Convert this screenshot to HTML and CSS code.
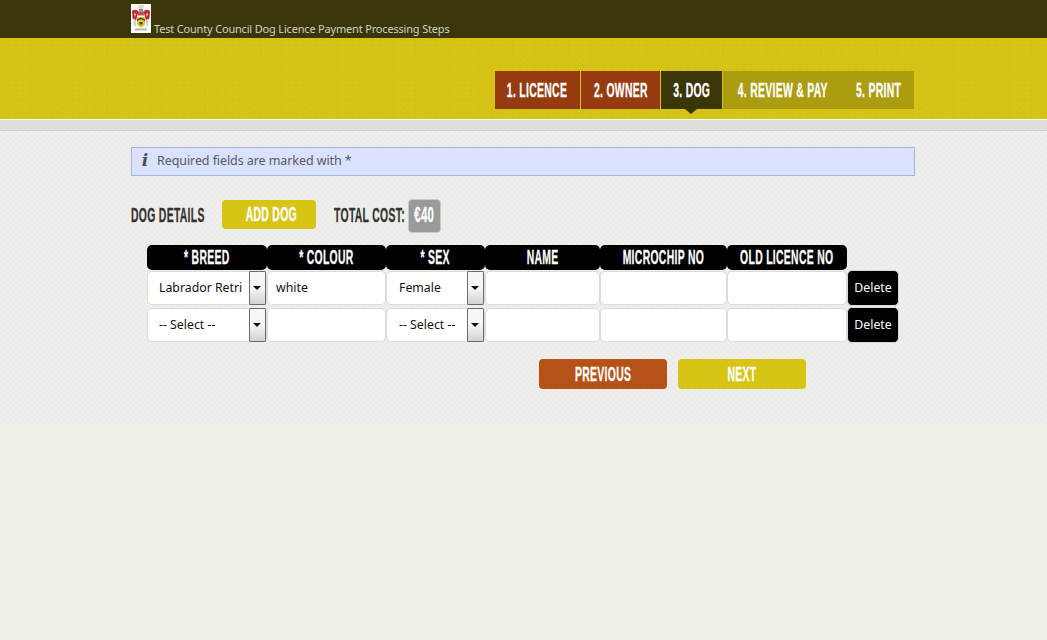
FILE: index.html
```html
<!DOCTYPE html>
<html lang="en">
<head>
<meta charset="utf-8">
<title>Dog Licence Payment Processing Steps</title>
<link rel="stylesheet" href="styles.css">
</head>
<body>
<header class="topbar">
  <div class="wrap topbar-inner">
    <svg class="crest" viewBox="0 0 20 29" aria-hidden="true">
      <rect width="20" height="29" fill="#fff"/>
      <path d="M7 1h6l-.5 4.500h-5z" fill="#dcd9d0"/>
      <path d="M8 5h4v2.500H8z" fill="#8e8a80"/>
      <path d="M1 7c2-2 5-1.500 6.500.5L6 13l-1 3.500-3.500-2zM19 7c-2-2-5-1.500-6.500.5L14 13l1 3.500 3.500-2z" fill="#c62a36"/>
      <path d="M3 9l2 1-1 3zM17 9l-2 1 1 3z" fill="#f0d9da"/>
      <path d="M7 7.500h6v4H7z" fill="#b9535a"/>
      <path d="M6 13h8v6.500c0 2-2 3-4 4-2-1-4-2-4-4z" fill="#d9c93a"/>
      <path d="M6 15.500l4-2 4 2v1.500l-4-2-4 2z" fill="#2d3a22"/>
      <path d="M8.500 18h3v2.500h-3z" fill="#46442c"/>
      <path d="M2.500 15l2.500 1v7l-2.500-2zM17.500 15l-2.500 1v7l2.500-2z" fill="#d8d4c8"/>
      <path d="M4 24.500h12v2H4z" fill="#b5b2a8"/>
    </svg>
    <span class="site-title">Test County Council Dog Licence Payment Processing Steps</span>
  </div>
</header>

<section class="banner">
  <div class="wrap banner-inner">
    <nav class="steps">
      <a class="step done s1"><span class="cond">1. Licence</span></a>
      <a class="step done s2"><span class="cond">2. Owner</span></a>
      <a class="step current s3"><span class="cond">3. Dog</span></a>
      <a class="step todo s4"><span class="cond">4. Review &amp; Pay</span></a>
      <a class="step todo s5"><span class="cond">5. Print</span></a>
    </nav>
  </div>
</section>
<div class="band"></div>

<main class="content">
  <div class="wrap">
    <p class="notice"><span class="notice-i">i</span>Required fields are marked with *</p>

    <div class="summary">
      <h2 class="display summary-title"><span class="cond cond-left">Dog Details</span></h2>
      <button class="btn btn-yellow btn-add" type="button"><span class="cond">Add Dog</span></button>
      <span class="display total-label"><span class="cond cond-left">Total Cost:</span></span>
      <span class="display total-value"><span class="cond">€40</span></span>
    </div>

    <div class="dogs">
      <div class="th"><span class="cond">* Breed</span></div>
      <div class="th"><span class="cond">* Colour</span></div>
      <div class="th"><span class="cond">* Sex</span></div>
      <div class="th"><span class="cond">Name</span></div>
      <div class="th"><span class="cond">Microchip No</span></div>
      <div class="th"><span class="cond">Old Licence No</span></div>
      <div class="th-gap"></div>

      <div class="cell"><select class="field"><option>Labrador Retriever</option></select><span class="arrow"></span></div>
      <div class="cell"><input class="field" type="text" value="white"></div>
      <div class="cell"><select class="field"><option>Female</option></select><span class="arrow"></span></div>
      <div class="cell"><input class="field" type="text"></div>
      <div class="cell"><input class="field" type="text"></div>
      <div class="cell"><input class="field" type="text"></div>
      <div class="cell-del"><button class="del" type="button">Delete</button></div>

      <div class="cell"><select class="field"><option>-- Select --</option></select><span class="arrow"></span></div>
      <div class="cell"><input class="field" type="text"></div>
      <div class="cell"><select class="field"><option>-- Select --</option></select><span class="arrow"></span></div>
      <div class="cell"><input class="field" type="text"></div>
      <div class="cell"><input class="field" type="text"></div>
      <div class="cell"><input class="field" type="text"></div>
      <div class="cell-del"><button class="del" type="button">Delete</button></div>
    </div>

    <div class="actions">
      <button class="btn btn-rust btn-nav" type="button"><span class="cond">Previous</span></button>
      <button class="btn btn-yellow btn-nav" type="button"><span class="cond">Next</span></button>
    </div>
  </div>
</main>
</body>
</html>
```
FILE: styles.css
```css
* { box-sizing: border-box; }
html, body { margin: 0; padding: 0; }
body {
  background: #efefe8;
  font-family: "Noto Sans", "Open Sans", sans-serif;
  font-size: 12px;
  color: #111;
  min-height: 640px;
}
.wrap { width: 784px; margin-left: 131px; }

.topbar { height: 38px; background: #3b3608; }
.topbar-inner { display: flex; align-items: flex-end; height: 38px; padding-bottom: 5px; }
.crest { width: 20px; height: 29px; display: block; flex: none; }
.site-title { color: #cfd2c4; font-size: 11px; letter-spacing: -.18px; line-height: 13px; margin-left: 3px; margin-bottom: -2px; }

.banner {
  height: 82px;
  background-color: #d7c316;
  background-image:
    radial-gradient(circle at 30% 40%, rgba(150,130,0,.06) 0 1px, transparent 1.5px),
    radial-gradient(circle at 70% 75%, rgba(150,130,0,.05) 0 1px, transparent 1.5px);
  background-size: 7px 5px, 11px 9px;
  border-bottom: 1px solid #fff;
}
.banner-inner { display: flex; justify-content: flex-end; padding-top: 33px; }
.steps { display: flex; margin-right: 1px; height: 38px; }
.step, .display, .th, .btn {
  font-family: "Liberation Sans", sans-serif;
  font-weight: 700;
  font-size: 20px;
  text-transform: uppercase;
  white-space: nowrap;
}
.cond {
  display: inline-block;
  letter-spacing: .6px;
  transform: scaleX(.52);
  transform-origin: 50% 50%;
  -webkit-text-stroke: .3px currentColor;
}
.cond-left { transform-origin: 0 50%; }
.step {
  display: flex; align-items: center; justify-content: center;
  position: relative;
  color: #fff;
}
.done { background: #963b0f; }
.current { background: #3b3608; }
.todo { background: #ac9c10; }
.s1 { width: 85px; margin-right: 1px; }
.s2 { width: 79px; margin-right: 1px; }
.s3 { width: 61px; margin-right: 1px; }
.s4 { width: 120px; }
.s5 { width: 71px; }
.current::after {
  content: "";
  position: absolute;
  left: 24px; top: 38px;
  border-style: solid;
  border-width: 5px 6px 0;
  border-color: #3b3608 transparent transparent;
}

.band { height: 11px; background: #dededc; border-bottom: 1px solid #cfcfcd; }

.content {
  height: 294px;
  padding-top: 17px;
  background-color: #efeeeb;
  background-image: conic-gradient(#ebebe9 25%, transparent 0 50%, #ebebe9 0 75%, transparent 0);
  background-size: 6px 6px;
}
.notice {
  margin: -1px 0 0;
  height: 29px;
  width: 784px;
  display: flex; align-items: center;
  padding-bottom: 2px;
  background: #dbe2ff;
  border: 1px solid #a3b4e6;
  color: #555a66;
  font-size: 12.5px;
  letter-spacing: -.08px;
}
.notice-i {
  width: 25px; padding-left: 1px; text-align: center;
  font-family: "DejaVu Serif", "Liberation Serif", serif;
  font-weight: 700; font-style: italic; font-size: 17px; line-height: 17px;
  color: #4b4f5a;
}

.summary { display: flex; align-items: center; margin-top: 23px; height: 34px; }
.display { color: #33332f; margin: 0; }
.summary-title { width: 91px; margin-top: -2px; }
.btn {
  border: 0; padding: 0; color: #fff; border-radius: 4px;
  display: block; text-align: center; overflow: hidden;
}
.btn-yellow { background: #d8c415; }
.btn-rust { background: #b65118; }
.btn-add { width: 94px; height: 29px; margin-bottom: 4px; }
.total-label { margin-left: 18px; width: 74px; margin-top: -2px; }
.total-value {
  width: 33px; height: 34px; line-height: 30px; text-align: center;
  background: #9a9a9a; color: #fff; font-size: 22px;
  border: 1px solid #c9c9c9; border-radius: 4px;
}
.total-value .cond { margin: 0 -10px; }

.dogs {
  display: grid;
  grid-template-columns: 120px 119px 99px 115px 127px 120px 52px;
  grid-template-rows: 25px 37px 37px;
  margin-top: 12px;
  margin-left: 16px;
  width: 752px;
}
.th {
  background: #000; color: #fff; line-height: 25px;
  text-align: center; border-radius: 5px; overflow: hidden;
}
.th .cond { margin: 0 -40px; }
.cell { position: relative; padding: 1px 0 1px; }
.field {
  display: block; width: 100%; height: 34px; margin: 0;
  background: #fff; border: 1px solid #dcdcda; border-radius: 5px;
  font-family: "Noto Sans", "Open Sans", sans-serif; font-size: 12.3px; color: #111;
  padding: 0 8px 2px; outline: 0;
  appearance: none; -webkit-appearance: none;
}
select.field { padding: 0 24px 2px 11px; }
.cell:nth-child(7n+3) select.field { padding-left: 12px; }
.arrow {
  position: absolute; right: 1px; top: 1px; width: 17px; height: 34px;
  background: linear-gradient(#f6f6f6 0 50%, #d2d2d2);
  border: 1px solid #6b6b6b; border-radius: 1px;
  pointer-events: none;
}
.arrow::after {
  content: ""; position: absolute; left: 3px; top: 14px;
  border-style: solid; border-width: 4px 4px 0;
  border-color: #111 transparent transparent;
}
.cell-del { padding: 0; }
.del {
  display: block; width: 52px; height: 36px; padding: 0 0 2px;
  background: #000; color: #fff; border: 1px solid #d8d8d6; border-radius: 5px;
  font-family: "Noto Sans", "Open Sans", sans-serif; font-size: 12.3px;
}

.actions { display: flex; gap: 11px; margin-top: 15px; margin-left: 408px; }
.btn-nav { width: 128px; height: 30px; }
```
